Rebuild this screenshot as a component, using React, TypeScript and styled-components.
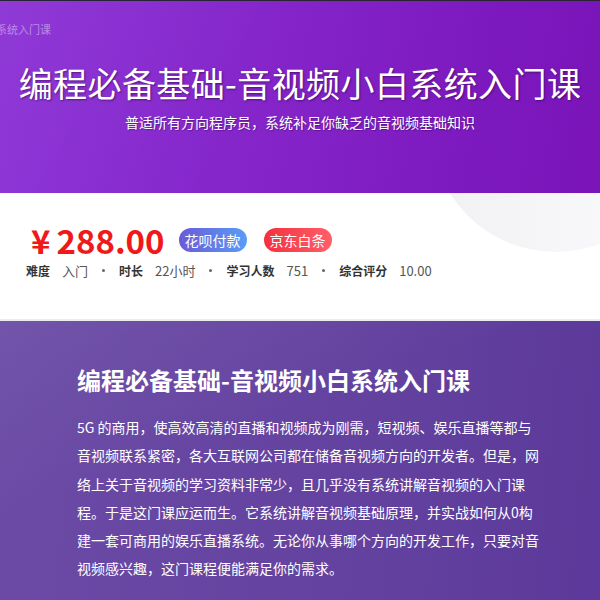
import { Fragment } from 'react';
import styled, { createGlobalStyle } from 'styled-components';

// ============================================================================
// Global
// ============================================================================

const GlobalStyle = createGlobalStyle`
  html, body {
    margin: 0;
    padding: 0;
    background: #ffffff;
  }
  body {
    font-family: "Noto Sans CJK SC", "Noto Sans", sans-serif;
  }
`;

// ============================================================================
// Banner
// ============================================================================

const Page = styled.div`
  width: 600px;
  height: 600px;
  overflow: hidden;
  display: flex;
  flex-direction: column;
`;

const Banner = styled.header`
  height: 192px;
  border-top: 1px solid #2b2335;
  background:
    linear-gradient(120deg, rgba(255, 255, 255, 0.04) 0%, rgba(255, 255, 255, 0) 45%),
    linear-gradient(100deg, #8b32d6 0%, #8424c9 45%, #7c19be 80%, #7a14b9 100%);
  display: flex;
  flex-direction: column;
  overflow: hidden;
`;

const Crumb = styled.div`
  margin: 20px 0 0 -4px;
  font-size: 11px;
  line-height: 16px;
  color: rgba(255, 255, 255, 0.42);
  white-space: nowrap;
`;

const BannerTitle = styled.h1`
  margin: 24px 0 0;
  font-size: 34px;
  font-weight: 400;
  line-height: 44px;
  color: #ffffff;
  text-align: center;
  letter-spacing: 0.4px;
  text-shadow: 1px 1px 2px rgba(40, 0, 60, 0.55);
`;

const BannerSub = styled.p`
  margin: 7px 0 0;
  font-size: 14px;
  line-height: 20px;
  color: #ffffff;
  text-align: center;
  text-shadow: 1px 1px 1px rgba(40, 0, 60, 0.4);
`;

// ============================================================================
// Price section
// ============================================================================

const PricePanel = styled.section`
  position: relative;
  height: 128px;
  padding: 27px 0 0 26px;
  box-sizing: border-box;
  background: #ffffff;
  border-bottom: 2px solid #ececee;
  overflow: hidden;
`;

const Decor = styled.div<{ $size: number; $top: number; $left: number }>`
  position: absolute;
  top: ${(p) => p.$top}px;
  left: ${(p) => p.$left}px;
  width: ${(p) => p.$size}px;
  height: ${(p) => p.$size}px;
  border-radius: 50%;
  background: linear-gradient(90deg, #f1f1f4 0%, #f7f7f9 60%, #fbfbfc 100%);
`;

const PriceRow = styled.div`
  position: relative;
  display: flex;
  align-items: center;
  height: 40px;
`;

const Price = styled.span`
  margin-left: 5px;
  font-size: 33px;
  font-weight: 700;
  line-height: 40px;
  color: #f01818;
  white-space: nowrap;
`;

const Yen = styled.span`
  margin-right: 6px;
`;

const PayBadge = styled.span<{ $from: string; $to: string; $gap: number }>`
  margin-left: ${(p) => p.$gap}px;
  height: 24px;
  padding: 0 6px;
  border-radius: 12px;
  display: inline-flex;
  align-items: center;
  font-size: 14px;
  color: #ffffff;
  background: linear-gradient(90deg, ${(p) => p.$from}, ${(p) => p.$to});
`;

const InfoRow = styled.div`
  position: relative;
  display: flex;
  align-items: center;
  margin-top: 1px;
  height: 18px;
  white-space: nowrap;
`;

const InfoLabel = styled.span`
  font-size: 12px;
  font-weight: 700;
  color: #333333;
`;

const InfoValue = styled.span`
  margin-left: 12px;
  font-size: 13px;
  color: #555555;
`;

const Dot = styled.span`
  width: 3px;
  height: 3px;
  margin: 0 14px;
  border-radius: 50%;
  background: #666666;
`;

// ============================================================================
// Intro section
// ============================================================================

const Intro = styled.section`
  flex: 1;
  padding: 42px 0 0 77px;
  background:
    linear-gradient(160deg, rgba(255, 255, 255, 0.05) 0%, rgba(255, 255, 255, 0) 40%),
    linear-gradient(95deg, #6b4ba6 0%, #6443a0 55%, #5c399a 100%);
`;

const IntroTitle = styled.h2`
  margin: 0;
  font-size: 24px;
  font-weight: 700;
  line-height: 34px;
  color: #ffffff;
`;

const IntroText = styled.p`
  margin: 16px 0 0;
  font-size: 14px;
  line-height: 28.3px;
  color: #ffffff;
  white-space: nowrap;
`;

// ============================================================================
// Component
// ============================================================================

const info = [
  { label: '难度', value: '入门' },
  { label: '时长', value: '22小时' },
  { label: '学习人数', value: '751' },
  { label: '综合评分', value: '10.00' },
];

const introLines = [
  '5G 的商用，使高效高清的直播和视频成为刚需，短视频、娱乐直播等都与',
  '音视频联系紧密，各大互联网公司都在储备音视频方向的开发者。但是，网',
  '络上关于音视频的学习资料非常少，且几乎没有系统讲解音视频的入门课',
  '程。于是这门课应运而生。它系统讲解音视频基础原理，并实战如何从0构',
  '建一套可商用的娱乐直播系统。无论你从事哪个方向的开发工作，只要对音',
  '视频感兴趣，这门课程便能满足你的需求。',
];

export default function App() {
  return (
    <>
      <GlobalStyle />
      <Page>
        <Banner>
          <Crumb>系统入门课</Crumb>
          <BannerTitle>编程必备基础-音视频小白系统入门课</BannerTitle>
          <BannerSub>普适所有方向程序员，系统补足你缺乏的音视频基础知识</BannerSub>
        </Banner>

        <PricePanel>
          <Decor $size={250} $top={-191} $left={431} />
          <Decor $size={120} $top={112} $left={584} />
          <PriceRow>
            <Price>
              <Yen>¥</Yen>288.00
            </Price>
            <PayBadge $from="#6a5bd7" $to="#5a9cf6" $gap={14}>花呗付款</PayBadge>
            <PayBadge $from="#f5303f" $to="#ff5f69" $gap={17}>京东白条</PayBadge>
          </PriceRow>
          <InfoRow>
            {info.map((item, i) => (
              <Fragment key={item.label}>
                {i > 0 && <Dot />}
                <InfoLabel>{item.label}</InfoLabel>
                <InfoValue>{item.value}</InfoValue>
              </Fragment>
            ))}
          </InfoRow>
        </PricePanel>

        <Intro>
          <IntroTitle>编程必备基础-音视频小白系统入门课</IntroTitle>
          <IntroText>
            {introLines.map((line, i) => (
              <Fragment key={i}>
                {line}
                {i < introLines.length - 1 && <br />}
              </Fragment>
            ))}
          </IntroText>
        </Intro>
      </Page>
    </>
  );
}
